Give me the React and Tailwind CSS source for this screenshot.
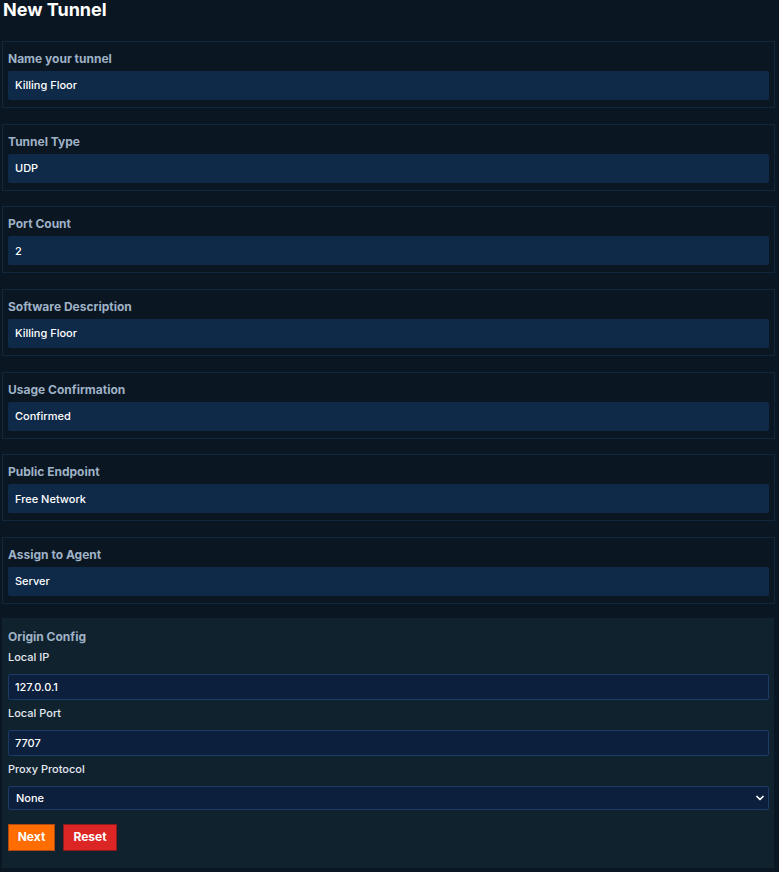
import { ChevronDown } from 'lucide-react';

const fields = [
  { label: 'Name your tunnel', value: 'Killing Floor' },
  { label: 'Tunnel Type', value: 'UDP' },
  { label: 'Port Count', value: '2' },
  { label: 'Software Description', value: 'Killing Floor' },
  { label: 'Usage Confirmation', value: 'Confirmed' },
  { label: 'Public Endpoint', value: 'Free Network' },
  { label: 'Assign to Agent', value: 'Server' },
];

const FieldCard = ({ label, value }) => (
  <div className="h-[67px] border border-[#13273a] px-[5px] pt-[9px]">
    <div className="text-[12px] leading-[16px] font-bold text-[#9fb2c6]">{label}</div>
    <div className="mt-[4px] h-[29px] bg-[#0f2a48] rounded-[2px] px-[7px] flex items-center text-[11px] font-medium text-white">
      {value}
    </div>
  </div>
);

const OriginInput = ({ value }) => (
  <div className="h-[26px] bg-[#0c1f3c] border border-[#1b3b66] rounded-[2px] px-[6px] flex items-center text-[11px] font-medium text-white">
    {value}
  </div>
);

export default function App() {
  return (
    <div className="min-h-[872px] bg-[#0a1622] pl-[2px] pr-[4px] font-['Inter','Liberation_Sans',sans-serif]">
      <h1 className="pl-[1px] text-[18px] leading-[20px] font-bold text-white">New Tunnel</h1>

      <div className="mt-[21px] flex flex-col gap-[15.67px]">
        {fields.map((f) => (
          <FieldCard key={f.label} label={f.label} value={f.value} />
        ))}
      </div>

      {/* Origin Config */}
      <div className="mt-[14px] h-[250px] bg-[#11222f] border-r border-[#0a1622] pl-[6px] pr-[5px] pt-[11px]">
        <div className="text-[12px] leading-[16px] font-bold text-[#9fb2c6]">Origin Config</div>
        <div className="mt-[5px] mb-[10px] text-[11px] leading-[14px] font-medium text-[#e3e9ef]">Local IP</div>
        <OriginInput value="127.0.0.1" />
        <div className="mt-[6px] mb-[10px] text-[11px] leading-[14px] font-medium text-[#e3e9ef]">Local Port</div>
        <OriginInput value="7707" />
        <div className="mt-[6px] mb-[10px] text-[11px] leading-[14px] font-medium text-[#e3e9ef]">Proxy Protocol</div>
        <div className="h-[24px] bg-[#0c1f3c] border border-[#1b3b66] rounded-[2px] pl-[7px] pr-[2px] flex items-center justify-between text-[11px] font-medium text-white">
          <span>None</span>
          <ChevronDown className="w-[12px] h-[12px] text-white" strokeWidth={3.5} />
        </div>
        <div className="mt-[14px] flex gap-[8px]">
          <button className="h-[27px] w-[47px] bg-[#ff6c00] border border-[#b4480c] text-[12px] font-bold text-white">
            Next
          </button>
          <button className="h-[27px] w-[54px] bg-[#dc2626] border border-[#8e1a1a] text-[12px] font-bold text-white">
            Reset
          </button>
        </div>
      </div>
    </div>
  );
}
